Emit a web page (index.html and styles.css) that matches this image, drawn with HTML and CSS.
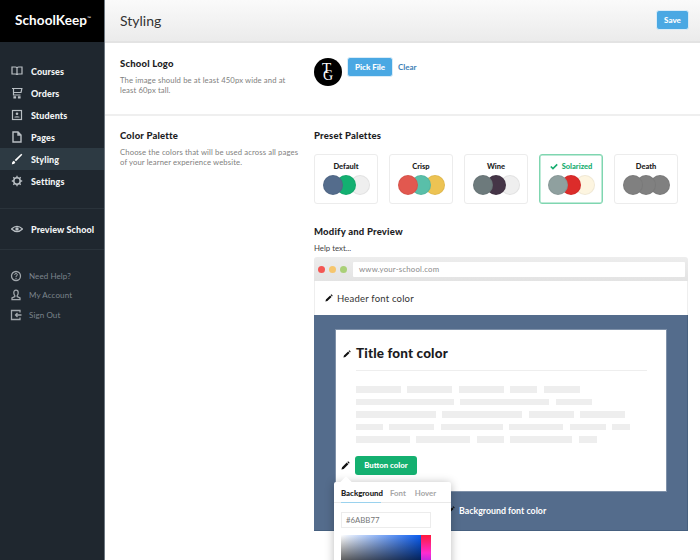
FILE: index.html
```html
<!DOCTYPE html>
<html lang="en">
<head>
<meta charset="utf-8">
<title>SchoolKeep - Styling</title>
<link rel="stylesheet" href="styles.css">
</head>
<body>
<svg class="defs" width="0" height="0">
  <symbol id="pencil" viewBox="0 0 10 10"><path d="M0.5 9.5 L1.2 7 L6.4 1.8 L8.2 3.6 L3 8.800 Z M7 1.200 L8 0.400 L9.600 2 L8.800 3 Z" fill="currentColor"/></symbol>
</svg>
<div class="app">
  <aside class="sidebar">
    <div class="brand">SchoolKeep<sup>™</sup></div>
    <nav class="nav-main">
      <a class="nav-item"><svg class="ico" viewBox="0 0 12 12"><path d="M1 2h3.500q1.500 0 1.500 1v7q0-1-1.500-1H1zM11 2H7.500Q6 2 6 3v7q0-1 1.500-1H11z" fill="none" stroke="currentColor" stroke-width="1.200"/></svg>Courses</a>
      <a class="nav-item"><svg class="ico" viewBox="0 0 12 12"><path d="M1 1.500h10.500M2.500 1.500V8h7M3 9.800h1.500v1H3zM7.500 9.800H9v1H7.500zM2.500 5.500h7.500l.8-3.500" fill="none" stroke="currentColor" stroke-width="1.200"/></svg>Orders</a>
      <a class="nav-item"><svg class="ico" viewBox="0 0 12 12"><rect x="1.500" y="1.500" width="9" height="9" fill="none" stroke="currentColor" stroke-width="1.200"/><circle cx="6" cy="4.800" r="1.300" fill="currentColor"/><path d="M3.500 8.500h5V7.800q-2.500-1.300-5 0z" fill="currentColor"/></svg>Students</a>
      <a class="nav-item"><svg class="ico" viewBox="0 0 12 12"><path d="M2 1h5l3 3v7H2z M7 1v3h3" fill="none" stroke="currentColor" stroke-width="1.400"/></svg>Pages</a>
      <a class="nav-item active"><svg class="ico ico-on" viewBox="0 0 12 12"><path d="M.8 11.200q0-2.700 2-3.400l1.500 1.400q-.6 2.300-3.500 2zM3.700 7 10.300 .8l1 1L5 8.300z" fill="currentColor"/></svg>Styling</a>
      <a class="nav-item"><svg class="ico" viewBox="0 0 12 12"><circle cx="6" cy="6" r="3.200" fill="none" stroke="currentColor" stroke-width="1.500"/><path d="M6 .8v2M6 9.200v2M.8 6h2M9.200 6h2M2.300 2.300l1.400 1.400M8.300 8.300l1.400 1.400M9.700 2.300 8.300 3.700M3.700 8.300 2.300 9.700" stroke="currentColor" stroke-width="1.300"/></svg>Settings</a>
    </nav>
    <div class="nav-preview">
      <a class="nav-item"><svg class="ico" viewBox="0 0 12 12"><path d="M.5 6Q6 .8 11.500 6 6 11.200 .5 6z" fill="none" stroke="currentColor" stroke-width="1.200"/><circle cx="6" cy="6" r="1.700" fill="currentColor"/></svg>Preview School</a>
    </div>
    <nav class="nav-sub">
      <a class="nav-sub-item"><svg class="ico" viewBox="0 0 12 12"><circle cx="6" cy="6" r="4.500" fill="none" stroke="currentColor" stroke-width="1.300"/><path d="M4.600 4.800Q4.800 3.500 6 3.500T7.400 4.800Q7.400 5.700 6 6.300V7.200M6 8v1" fill="none" stroke="currentColor"/></svg>Need Help?</a>
      <a class="nav-sub-item"><svg class="ico" viewBox="0 0 12 12"><path d="M6 1.200Q8.200 1.200 8.200 3.800 8.200 5.600 7.200 6.600V7.500L10 9V10.700H2V9L4.800 7.500V6.600Q3.800 5.600 3.800 3.800 3.800 1.200 6 1.200z" fill="none" stroke="currentColor" stroke-width="1.300"/></svg>My Account</a>
      <a class="nav-sub-item"><svg class="ico" viewBox="0 0 12 12"><path d="M10 3.500V1.500H1.500V10.500H10V8.500M11.500 6H5.500M7.500 4 5.500 6l2 2" fill="none" stroke="currentColor" stroke-width="1.300"/></svg>Sign Out</a>
    </nav>
  </aside>

  <main class="main">
    <header class="topbar">
      <h1 class="page-title">Styling</h1>
      <button class="btn btn-save">Save</button>
    </header>

    <section class="section section-logo">
      <div class="side">
        <h2 class="side-title">School Logo</h2>
        <p class="side-text">The image should be at least 450px wide and at least 60px tall.</p>
      </div>
      <div class="content logo-row">
        <div class="logo-mark"><span class="logo-t">T</span><span class="logo-g">G</span></div>
        <button class="btn btn-pick">Pick File</button>
        <a class="clear">Clear</a>
      </div>
    </section>

    <section class="section section-palette">
      <div class="side">
        <h2 class="side-title">Color Palette</h2>
        <p class="side-text side-text-wide">Choose the colors that will be used across all pages of your learner experience website.</p>
      </div>
      <div class="content">
        <h3 class="sub-title">Preset Palettes</h3>
        <div class="palettes">
          <div class="palette"><div class="palette-name">Default</div><div class="dots"><i class="dot c-e"></i><i class="dot c-b"></i><i class="dot c-a"></i></div></div>
          <div class="palette"><div class="palette-name">Crisp</div><div class="dots"><i class="dot c-h"></i><i class="dot c-g"></i><i class="dot c-f"></i></div></div>
          <div class="palette"><div class="palette-name">Wine</div><div class="dots"><i class="dot c-o"></i><i class="dot c-j"></i><i class="dot c-a"></i></div></div>
          <div class="palette selected"><div class="palette-name"><svg class="check" viewBox="0 0 10 8"><path d="M1 4l2.700 2.700L9 1.300" fill="none" stroke="currentColor" stroke-width="2"/></svg>Solarized</div><div class="dots"><i class="dot c-m"></i><i class="dot c-l"></i><i class="dot c-k"></i></div></div>
          <div class="palette"><div class="palette-name">Death</div><div class="dots"><i class="dot c-n"></i><i class="dot c-n"></i><i class="dot c-n"></i></div></div>
        </div>
        <h3 class="sub-title modify">Modify and Preview</h3>
        <p class="help">Help text...</p>
        <div class="browser">
          <div class="chrome">
            <i class="light l-r"></i><i class="light l-y"></i><i class="light l-g"></i>
            <div class="url">www.your-school.com</div>
          </div>
          <div class="site-header"><svg class="pen"><use href="#pencil"/></svg>Header font color</div>
          <div class="site-body">
            <div class="site-card">
              <div class="card-title"><svg class="pen pen-title"><use href="#pencil"/></svg>Title font color</div>
              <div class="skeleton">
                <div class="sk-row"><i style="width:45px"></i><i style="width:45px"></i><i style="width:45px"></i><i style="width:27px"></i><i style="width:36px"></i></div>
                <div class="sk-row"><i style="width:98px"></i><i style="width:89px"></i><i style="width:36px"></i></div>
                <div class="sk-row"><i style="width:80px"></i><i style="width:80px"></i><i style="width:45px"></i><i style="width:45px"></i></div>
                <div class="sk-row"><i style="width:27px"></i><i style="width:45px"></i><i style="width:62px"></i><i style="width:54px"></i><i style="width:36px"></i><i style="width:18px"></i></div>
                <div class="sk-row"><i style="width:54px"></i><i style="width:54px"></i><i style="width:27px"></i><i style="width:62px"></i><i style="width:18px"></i></div>
              </div>
              <div class="card-action"><svg class="pen pen-btn"><use href="#pencil"/></svg><span class="btn-green">Button color</span></div>
            </div>
            <div class="bg-label"><svg class="pen"><use href="#pencil"/></svg>Background font color</div>
          </div>
        </div>
      </div>
    </section>

    <div class="popover">
      <div class="tabs"><span class="tab tab-on">Background</span><span class="tab">Font</span><span class="tab">Hover</span></div>
      <div class="hex">#6ABB77</div>
      <div class="picker"><div class="sat"></div><div class="hue"></div></div>
    </div>
  </main>
</div>
</body>
</html>
```
FILE: styles.css
```css
* { box-sizing: border-box; }
html, body { margin: 0; height: 100%; overflow: hidden; background: #fff; }
body { font-family: "Lato", "Liberation Sans", sans-serif; color: #1c1c1e; }
.defs { position: absolute; }
.app { display: flex; width: 700px; height: 560px; overflow: hidden; }

.sidebar { width: 105px; flex: none; background: #1f272f; border-right: 1px solid #6d7780; color: #fff; }
.brand { height: 42px; background: #000; font-size: 13.500px; font-weight: 700; line-height: 40px; padding-left: 15px; letter-spacing: .1px; }
.brand sup { font-size: 5px; font-weight: 400; vertical-align: 5px; line-height: 0; }
.nav-main { padding-top: 18px; padding-bottom: 16px; border-bottom: 1px solid #2a333b; }
.nav-item { display: flex; align-items: center; height: 22px; padding-left: 11px; font-size: 9px; font-weight: 900; color: #f2f4f5; letter-spacing: .1px; }
.nav-item.active { background: #2d3a43; }
.ico { width: 12px; height: 12px; margin-right: 8px; flex: none; color: #b9bfc4; }
.ico-on { color: #fff; }
.nav-preview { height: 41px; display: flex; align-items: center; border-bottom: 1px solid #2a333b; }
.nav-sub { padding-top: 16px; display: flex; flex-direction: column; }
.nav-sub-item { display: flex; align-items: center; height: 19.500px; padding-left: 10px; font-size: 8px; color: #7c858d; letter-spacing: .1px; }
.nav-sub-item .ico { color: #a2a8ad; margin-right: 7px; }

.main { position: relative; flex: 1; min-width: 0; }
.topbar { height: 43px; display: flex; align-items: center; justify-content: space-between; padding: 0 11px 0 15px; background: linear-gradient(#fafafa, #ebebeb); border-bottom: 2px solid #e3e3e3; }
.page-title { margin: 0; font-size: 14px; font-weight: 400; color: #333; }
.btn { border: 1px solid #d9ecf8; border-radius: 3px; background: #4aa8e3; color: #fff; font-family: inherit; font-size: 8px; font-weight: 900; padding: 0; }
.btn-save { width: 33px; height: 20px; margin-top: -1px; }

.section { display: flex; padding-left: 15px; }
.section-logo { height: 73px; border-bottom: 2px solid #efefef; padding-top: 15px; }
.section-palette { padding-top: 14px; }
.side { width: 194px; flex: none; }
.side-title { margin: 0 0 5px; font-size: 9.500px; font-weight: 900; line-height: 12px; color: #1d1d1f; letter-spacing: .2px; }
.side-text { margin: 0; width: 172px; font-size: 7.700px; line-height: 10px; color: #7f7f80; letter-spacing: .12px; }
.side-text-wide { width: 182px; }
.content { flex: 1; min-width: 0; }
.logo-row { display: flex; align-items: flex-start; }
.logo-mark { position: relative; width: 28px; height: 28px; border-radius: 50%; background: #000; color: #fff; font-family: "Liberation Serif", serif; }
.logo-t { position: absolute; left: 8px; top: 3px; font-size: 15px; line-height: 15px; }
.logo-g { position: absolute; left: 9px; top: 11px; font-size: 14px; line-height: 14px; }
.btn-pick { width: 46px; height: 20px; margin-left: 5px; margin-top: -1px; }
.clear { margin-left: 5px; font-size: 8px; font-weight: 700; line-height: 18px; color: #3c7fb6; }

.sub-title { margin: 0; font-size: 9.500px; font-weight: 900; line-height: 12px; color: #1d1d1f; letter-spacing: .2px; }
.palettes { display: flex; gap: 11px; margin-top: 12px; }
.palette { width: 64px; height: 50px; border: 1px solid #ececec; border-radius: 3px; padding-top: 6px; }
.palette.selected { border-color: #7fd6b0; box-shadow: inset 0 0 0 .5px #7fd6b0; }
.palette-name { display: flex; justify-content: center; align-items: center; height: 11px; font-size: 7.500px; font-weight: 900; color: #222; }
.selected .palette-name { color: #16ad6f; }
.check { width: 8px; height: 7px; color: #16ad6f; margin-right: 4px; }
.dots { display: flex; justify-content: center; margin-top: 3px; }
.dot { width: 20px; height: 20px; border-radius: 50%; border: 1px solid rgba(0,0,0,.05); margin-left: -6.500px; }
.dot:first-child { margin-left: 0; z-index: 3; }
.dot:nth-child(2) { z-index: 2; }
.c-e { background: #546c8c; }
.c-b { background: #13b071; }
.c-a { background: #efefef; }
.c-h { background: #e2584f; }
.c-g { background: #59bfa9; }
.c-f { background: #edc353; }
.c-o { background: #6d7a7c; }
.c-j { background: #453547; }
.c-m { background: #8fa09f; }
.c-l { background: #dc2c2a; }
.c-k { background: #fdf5e0; }
.c-n { background: #808080; }

.modify { margin-top: 22px; }
.help { margin: 5px 0 0; font-size: 7.800px; line-height: 10px; color: #444; }
.browser { width: 374px; margin-top: 4px; }
.chrome { display: flex; align-items: center; height: 24px; background: linear-gradient(#ededed, #e3e3e3); border-radius: 3px 3px 0 0; padding-left: 4px; }
.light { width: 7px; height: 7px; border-radius: 50%; margin-right: 4px; flex: none; }
.l-r { background: #f45653; }
.l-y { background: #f6c66e; }
.l-g { background: #aad078; }
.url { width: 332px; height: 15px; margin-left: 2px; background: #fff; border-radius: 1px; font-size: 7.800px; line-height: 15px; padding-left: 6px; color: #8a8a8a; letter-spacing: .2px; }
.site-header { display: flex; align-items: center; height: 34px; padding-left: 10px; font-size: 9.500px; color: #333; border-left: 1px solid #eee; border-right: 1px solid #eee; letter-spacing: .2px; }
.pen { width: 8px; height: 8px; margin-right: 4px; color: #111; flex: none; }
.site-body { position: relative; height: 216px; background: #546c8c; border-right: 1px solid #46607f; border-bottom: 1px solid #46607f; padding: 15px 22px 0; }
.site-card { position: relative; width: 330px; height: 161px; background: #fff; box-shadow: 0 0 0 1px rgba(255,255,255,.25); padding: 14px 20px 0; }
.card-title { position: relative; font-size: 13.500px; font-weight: 900; line-height: 19px; padding-bottom: 7px; border-bottom: 1px solid #eee; color: #1b1b1d; width: 291px; letter-spacing: .15px; }
.pen-title { position: absolute; left: -13px; top: 6px; }
.skeleton { margin-top: 15px; display: flex; flex-direction: column; gap: 6px; }
.sk-row { display: flex; gap: 6.400px; }
.sk-row i { height: 6.600px; background: #eee; display: block; }
.card-action { position: absolute; left: 5px; top: 126px; display: flex; align-items: center; }
.pen-btn { width: 9px; height: 9px; margin-right: 5px; }
.btn-green { display: block; width: 62px; height: 19px; border-radius: 3px; background: #14b070; color: #fff; text-align: center; font-size: 7.800px; font-weight: 900; line-height: 19px; }
.bg-label { display: flex; align-items: center; margin-left: 111px; margin-top: 14px; height: 10px; font-size: 8.800px; font-weight: 700; color: #fff; }

.popover { position: absolute; left: 229px; top: 482px; width: 117px; height: 90px; background: #fff; border-radius: 2px; box-shadow: 0 1px 10px rgba(0,0,0,.28); padding: 0 7px; }
.popover::before { content: ""; position: absolute; left: 8px; top: -4px; width: 8px; height: 8px; background: #fff; transform: rotate(45deg); }
.tabs { position: relative; display: flex; gap: 9px; height: 21px; margin: 0 -7px; padding: 6px 7px 0; border-bottom: 1px solid #e9e9e9; }
.tab { font-size: 7.800px; font-weight: 700; color: #a5a5a5; line-height: 11px; }
.tab-on { color: #222; font-weight: 900; height: 15px; border-bottom: 1px solid #9ad2ee; width: 40px; }
.hex { width: 90px; height: 16px; margin-top: 9px; border: 1px solid #ececec; font-size: 7.800px; line-height: 14px; padding-left: 4px; color: #777; }
.picker { display: flex; width: 90px; height: 40px; margin-top: 7px; }
.sat { flex: 1; background: linear-gradient(to top, #000, transparent), linear-gradient(to right, #fff, #0a5cf0); }
.hue { width: 10px; background: linear-gradient(#ff1a3c, #ff2bd0 45%, #4a2bff); }
```
